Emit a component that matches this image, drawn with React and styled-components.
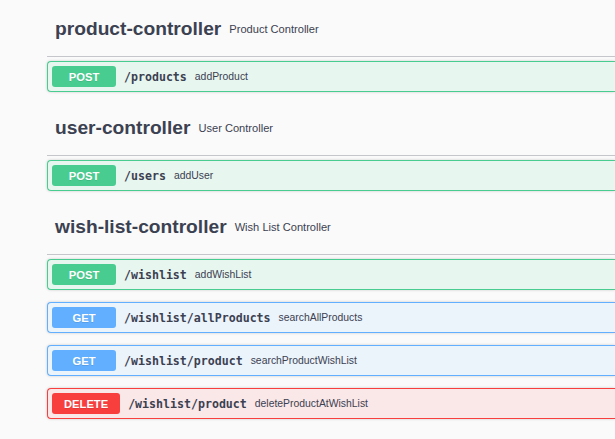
import React from 'react'
import styled, { createGlobalStyle } from 'styled-components'

const GlobalStyle = createGlobalStyle`
  html, body {
    margin: 0;
    padding: 0;
    background: #fafafa;
    overflow: hidden;
  }
  body {
    font-family: "Liberation Sans", Arial, sans-serif;
    color: #3b4151;
  }
`

const methods = {
  POST: { main: '#49cc90', bg: '#e8f6f0' },
  GET: { main: '#61affe', bg: '#ebf3fb' },
  DELETE: { main: '#f93e3e', bg: '#fae7e7' },
}

const sections = [
  {
    name: 'product-controller',
    desc: 'Product Controller',
    ops: [{ method: 'POST', path: '/products', summary: 'addProduct' }],
  },
  {
    name: 'user-controller',
    desc: 'User Controller',
    ops: [{ method: 'POST', path: '/users', summary: 'addUser' }],
  },
  {
    name: 'wish-list-controller',
    desc: 'Wish List Controller',
    ops: [
      { method: 'POST', path: '/wishlist', summary: 'addWishList' },
      { method: 'GET', path: '/wishlist/allProducts', summary: 'searchAllProducts' },
      { method: 'GET', path: '/wishlist/product', summary: 'searchProductWishList' },
      { method: 'DELETE', path: '/wishlist/product', summary: 'deleteProductAtWishList' },
    ],
  },
]

const App = () => {
  return (
    <Wrapper>
      <GlobalStyle />
      {sections.map(section => (
        <Section key={section.name}>
          <TagHeader>
            <TagName>{section.name}</TagName>
            <TagDesc>{section.desc}</TagDesc>
          </TagHeader>
          {section.ops.map(op => (
            <OpBlock key={op.method + op.path} $method={op.method}>
              <Method $method={op.method}>{op.method}</Method>
              <Path>{op.path}</Path>
              <Summary>{op.summary}</Summary>
            </OpBlock>
          ))}
        </Section>
      ))}
    </Wrapper>
  )
}

// the list runs on past the right edge of the window, so the right side has no border
const Wrapper = styled.div`
  padding: 5px 0 0 47px;
`
const Section = styled.div`
  display: flex;
  flex-direction: column;
`
const TagHeader = styled.div`
  display: flex;
  align-items: center;
  height: 48px;
  padding: 0 0 3px 8px;
  margin-bottom: 4px;
  border-bottom: 1px solid #c4c6cb;
`
const TagName = styled.span`
  font-size: 19.2px;
  font-weight: bold;
  color: #3b4151;
`
const TagDesc = styled.span`
  font-size: 11.1px;
  margin-left: 8px;
  color: #3b4151;
`
const OpBlock = styled.div`
  display: flex;
  align-items: center;
  height: 29px;
  padding: 0 4px;
  margin-bottom: 12px;
  border: 1px solid ${p => methods[p.$method].main};
  border-right: none;
  background: ${p => methods[p.$method].bg};
  border-radius: 4px 0 0 4px;
  box-shadow: 0 0 3px rgba(0, 0, 0, 0.19);
`
const Method = styled.span`
  display: flex;
  align-items: center;
  justify-content: center;
  box-sizing: border-box;
  min-width: 64px;
  height: 21px;
  padding: 0 12px;
  border-radius: 3px;
  background: ${p => methods[p.$method].main};
  color: #fff;
  font-size: 11.2px;
  font-weight: bold;
  text-shadow: 0 1px 0 rgba(0, 0, 0, 0.1);
`
const Path = styled.span`
  margin-left: 8px;
  font-family: "DejaVu Sans Mono", "Liberation Mono", monospace;
  font-size: 11.6px;
  font-weight: bold;
  color: #3b4151;
`
const Summary = styled.span`
  margin-left: 8px;
  font-size: 10.4px;
  color: #3b4151;
`

export default App
